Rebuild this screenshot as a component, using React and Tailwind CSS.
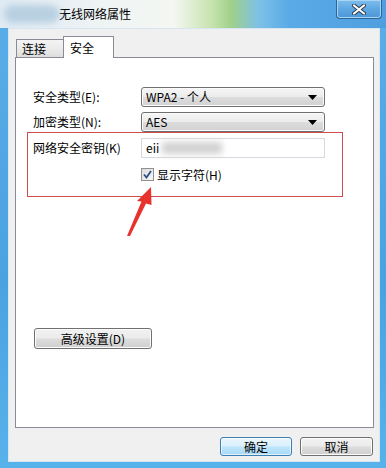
import React from "react";

function Combo({ value }) {
  return (
    <div className="w-[184px] h-[20px] rounded-[3px] border border-[#707070] bg-[linear-gradient(180deg,#f6f6f6_0%,#ececec_48%,#dcdcdc_52%,#d2d2d2_100%)] flex items-center pl-[4px] pr-[7px] shadow-[inset_0_0_0_1px_#fbfbfb]">
      <span className="text-[12px] leading-none text-black">{value}</span>
      <svg className="ml-auto" width="9" height="5" viewBox="0 0 9 5">
        <path d="M0 0h9L4.5 5z" fill="#000" />
      </svg>
    </div>
  );
}

function WinButton({ children, primary, className }) {
  return (
    <div
      className={
        "flex items-center justify-center rounded-[3px] border text-[12px] leading-none text-black " +
        (primary
          ? "border-[#3c7fb1] bg-[linear-gradient(180deg,#eaf6fd_0%,#d9f0fc_48%,#bee6fd_52%,#a7d9f5_100%)] shadow-[inset_0_0_0_1px_#ffffffa0] "
          : "border-[#707070] bg-[linear-gradient(180deg,#f2f2f2_0%,#ebebeb_48%,#dddddd_52%,#cfcfcf_100%)] shadow-[inset_0_0_0_1px_#fcfcfc] ") +
        className
      }
    >
      {children}
    </div>
  );
}

export default function App() {
  return (
    <div className="relative w-[386px] h-[468px] overflow-hidden flex flex-col bg-[linear-gradient(180deg,#5aaee8_0%,#4aa2e0_60%,#58b2ea_100%)] font-['Noto_Sans_CJK_SC',sans-serif]">
      {/* title bar */}
      <div className="h-[28px] flex items-center bg-[linear-gradient(90deg,#dfeaf3_0%,#eef3f4_25%,#f4f7f2_45%,#c6e3ad_55%,#9fd08a_60%,#7dc1e6_67%,#5aaae7_75%,#4f9fe0_100%)]">
        <div className="ml-[4px] w-[56px] h-[18px] rounded-full bg-[#b9d0e2] blur-[3px]" />
        <span className="-ml-[1px] text-[12px] leading-none text-black">无线网络属性</span>
        <div className="ml-auto mr-[4px] self-start w-[46px] h-[19px] rounded-b-[4px] border border-t-0 border-[#2a6598] bg-[linear-gradient(180deg,#7fbdec_0%,#5ea7e2_50%,#4b97d6_100%)] shadow-[inset_0_0_0_1px_#a9d4f4] flex items-center justify-center">
          <svg width="14" height="11" viewBox="0 0 14 11">
            <path d="M2 1.5l10 8M12 1.5l-10 8" stroke="#2b3a4a" strokeWidth="4" strokeLinecap="round" />
            <path d="M2 1.5l10 8M12 1.5l-10 8" stroke="#ffffff" strokeWidth="2.2" strokeLinecap="round" />
          </svg>
        </div>
      </div>

      {/* body */}
      <div className="flex-1 pl-[8px] pr-[6px] pb-[6px] flex">
        <div className="flex-1 bg-[#f0f0f0] border border-[#d6e6f2] pt-[7px] pl-[6px] pr-[5px] flex flex-col">
          {/* tabs */}
          <div className="flex items-end h-[21px] ml-[1px]">
            <div className="w-[47px] h-[18px] border border-r-0 border-b-0 border-[#898c95] bg-[linear-gradient(180deg,#f3f3f3_0%,#ebebeb_50%,#dddddd_100%)] flex items-center pl-[5px] text-[12px] leading-none text-black">
              连接
            </div>
            <div className="relative z-10 -mb-px w-[51px] h-[22px] border border-b-0 border-[#898c95] bg-white flex items-center pl-[6px] text-[12px] leading-none text-black">
              安全
            </div>
          </div>

          {/* tab page */}
          <div className="h-[371px] border border-[#898c95] bg-white pt-[29px] pl-[11px] flex flex-col">
            <div className="pl-[6px] flex items-center h-[20px]">
              <span className="w-[108px] text-[12px] leading-none text-black">安全类型(E):</span>
              <Combo value="WPA2 - 个人" />
            </div>
            <div className="mt-[5px] pl-[6px] flex items-center h-[20px]">
              <span className="w-[108px] text-[12px] leading-none text-black">加密类型(N):</span>
              <Combo value="AES" />
            </div>

            <div className="w-[316px] h-[65px] border border-[#cf4c4c] pl-[5px] pt-[5px]">
              <div className="flex items-center h-[20px]">
                <span className="w-[108px] text-[12px] leading-none text-black">网络安全密钥(K)</span>
                <div className="w-[184px] h-[20px] border border-[#d5dae0] bg-white flex items-center pl-[4px]">
                  <span className="text-[12px] leading-none text-black">eii</span>
                  <div className="ml-[3px] w-[60px] h-[12px] bg-[#d2d2d2] blur-[3px]" />
                </div>
              </div>
              <div className="mt-[10px] pl-[108px] flex items-center gap-[3px]">
                <div className="w-[13px] h-[13px] border border-[#8f8f8f] bg-[linear-gradient(135deg,#dcdcdc_0%,#f8f8f8_100%)] flex items-center justify-center">
                  <svg width="9" height="9" viewBox="0 0 9 9">
                    <path d="M1 4.5l2.5 3L8 1" fill="none" stroke="#2f4f8a" strokeWidth="1.8" />
                  </svg>
                </div>
                <span className="text-[12px] leading-none text-black">显示字符(H)</span>
              </div>
            </div>

            <WinButton className="mt-[131px] ml-[7px] w-[118px] h-[21px]">高级设置(D)</WinButton>
          </div>

          {/* dialog buttons */}
          <div className="mt-[9px] flex justify-end gap-[8px] pr-[1px]">
            <WinButton primary className="w-[72px] h-[19px]">确定</WinButton>
            <WinButton className="w-[73px] h-[19px]">取消</WinButton>
          </div>
        </div>
      </div>

      {/* annotation arrow */}
      <svg className="absolute left-0 top-0 pointer-events-none" width="386" height="468" viewBox="0 0 386 468">
        <path d="M151 187 L137 201 L141.5 201.5 L127 236 L130 236 L146 203.5 L151.5 205 Z" fill="#e8322e" />
      </svg>
    </div>
  );
}
